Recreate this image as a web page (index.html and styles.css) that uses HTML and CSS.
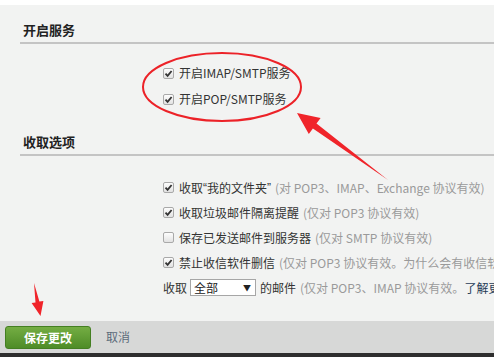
FILE: index.html
```html
<!DOCTYPE html>
<html>
	<head>
		<meta charset="UTF-8">
		<title>邮箱设置</title>
		<link rel="stylesheet" href="styles.css">
	</head>
	<body>
		<div class="page">
			<div class="box">
				<h3 class="title">开启服务</h3>
				<ul class="opts first">
					<li><span class="cb on"><svg width="9" height="9" viewBox="0 0 9 9"><path d="M1.5 4.6 L3.6 6.8 L7.6 2" fill="none" stroke="#333" stroke-width="1.8"/></svg></span>开启IMAP/SMTP服务</li>
					<li><span class="cb on"><svg width="9" height="9" viewBox="0 0 9 9"><path d="M1.5 4.6 L3.6 6.8 L7.6 2" fill="none" stroke="#333" stroke-width="1.8"/></svg></span>开启POP/SMTP服务</li>
				</ul>
				<h3 class="title">收取选项</h3>
				<ul class="opts second">
					<li><span class="cb on"><svg width="9" height="9" viewBox="0 0 9 9"><path d="M1.5 4.6 L3.6 6.8 L7.6 2" fill="none" stroke="#333" stroke-width="1.8"/></svg></span>收取<span class="q">“</span>我的文件夹<span class="q">”</span><em>(对 POP3、IMAP、Exchange 协议有效)</em></li>
					<li><span class="cb on"><svg width="9" height="9" viewBox="0 0 9 9"><path d="M1.5 4.6 L3.6 6.8 L7.6 2" fill="none" stroke="#333" stroke-width="1.8"/></svg></span>收取垃圾邮件隔离提醒<em>(仅对 POP3 协议有效)</em></li>
					<li><span class="cb"></span>保存已发送邮件到服务器<em>(仅对 SMTP 协议有效)</em></li>
					<li><span class="cb on"><svg width="9" height="9" viewBox="0 0 9 9"><path d="M1.5 4.6 L3.6 6.8 L7.6 2" fill="none" stroke="#333" stroke-width="1.8"/></svg></span>禁止收信软件删信<em>(仅对 POP3 协议有效。为什么会有收信软件删信</em></li>
					<li class="fetch">收取<span class="sel"><span>全部</span><span class="arr">▼</span></span>的邮件<em>(仅对 POP3、IMAP 协议有效。<a href="#">了解更多</a></em></li>
				</ul>
			</div>
			<div class="bar">
				<a href="#" class="btn">保存更改</a>
				<a href="#" class="cancel">取消</a>
			</div>
			<div class="bottom"></div>
		</div>
		<!-- 标注：红圈和箭头 -->
		<svg class="mark" width="495" height="357" viewBox="0 0 495 357">
			<ellipse cx="222" cy="87" rx="79" ry="34" fill="none" stroke="#ec2228" stroke-width="2"/>
			<polygon points="297,113 320.6,118 316.5,123.6 388,180 312.9,128.4 308.8,134" fill="#f0242a"/>
			<polygon points="40.5,316 43.4,301 39.4,301.6 34,283 35.5,302.4 31.6,303" fill="#f0242a"/>
		</svg>
	</body>
</html>
```

FILE: styles.css
```css
*{
	margin: 0;
	padding: 0;
	list-style-type: none;
}

a{
	text-decoration: none;
}

body{
	position: relative;
	width: 495px;
	height: 357px;
	overflow: hidden;
	background: #fff;
	font: 12px/18px "Noto Sans CJK SC", sans-serif;
	color: #333;
}

.page{
	padding-top: 5px;
	width: 494px;
}

.box{
	background: #f2f3f2;
	height: 316px;
	overflow: hidden;
}

.title{
	margin-left: 20px;
	padding: 16px 0 3px 3px;
	font-size: 13px;
	line-height: 18px;
	font-weight: bold;
	color: #222;
	border-bottom: 2px solid #c4c4c4;
}

.opts li{
	display: flex;
	align-items: center;
	padding-left: 163px;
	white-space: nowrap;
}

.opts.first{
	margin: 16px 0 5px;
}

.opts.first li{
	height: 26px;
}

.opts.second{
	margin-top: 19px;
}

.opts.second li{
	height: 25px;
}

.opts .q{
	font-family: "Liberation Sans", sans-serif;
}

.opts em{
	font-style: normal;
	color: #9a9a9a;
	margin-left: 4px;
}

.opts em a{
	color: #1f3b57;
}

.cb{
	display: inline-flex;
	flex-shrink: 0;
	align-items: center;
	justify-content: center;
	box-sizing: border-box;
	width: 11px;
	height: 11px;
	margin-right: 5px;
	border: 1px solid #a9a9a9;
	border-radius: 2px;
	background: linear-gradient(#fdfdfd, #e2e2e2);
}

.fetch{
	padding-left: 164px;
}

.sel{
	display: inline-flex;
	flex-shrink: 0;
	align-items: center;
	justify-content: space-between;
	box-sizing: border-box;
	width: 66px;
	height: 17px;
	margin: 0 4px 0 3px;
	padding: 0 4px 0 3px;
	border: 1px solid #a6a6a6;
	background: #fff;
	color: #222;
	font-size: 12px;
}

.sel .arr{
	font-size: 8px;
	color: #222;
}

.bar{
	display: flex;
	align-items: center;
	height: 32px;
	padding-left: 5px;
	background: #d7d8d7;
}

.btn{
	display: block;
	width: 84px;
	height: 21px;
	line-height: 21px;
	text-align: center;
	border: 1px solid #447f22;
	border-radius: 3px;
	background: linear-gradient(#74ad43, #4e8c27);
	color: #fff;
	font-weight: bold;
	font-size: 12px;
}

.cancel{
	margin-left: 15px;
	color: #5c6b7a;
}

.bottom{
	height: 4px;
	background: #2e2e2e;
}

.mark{
	position: absolute;
	left: 0;
	top: 0;
	pointer-events: none;
}
```
